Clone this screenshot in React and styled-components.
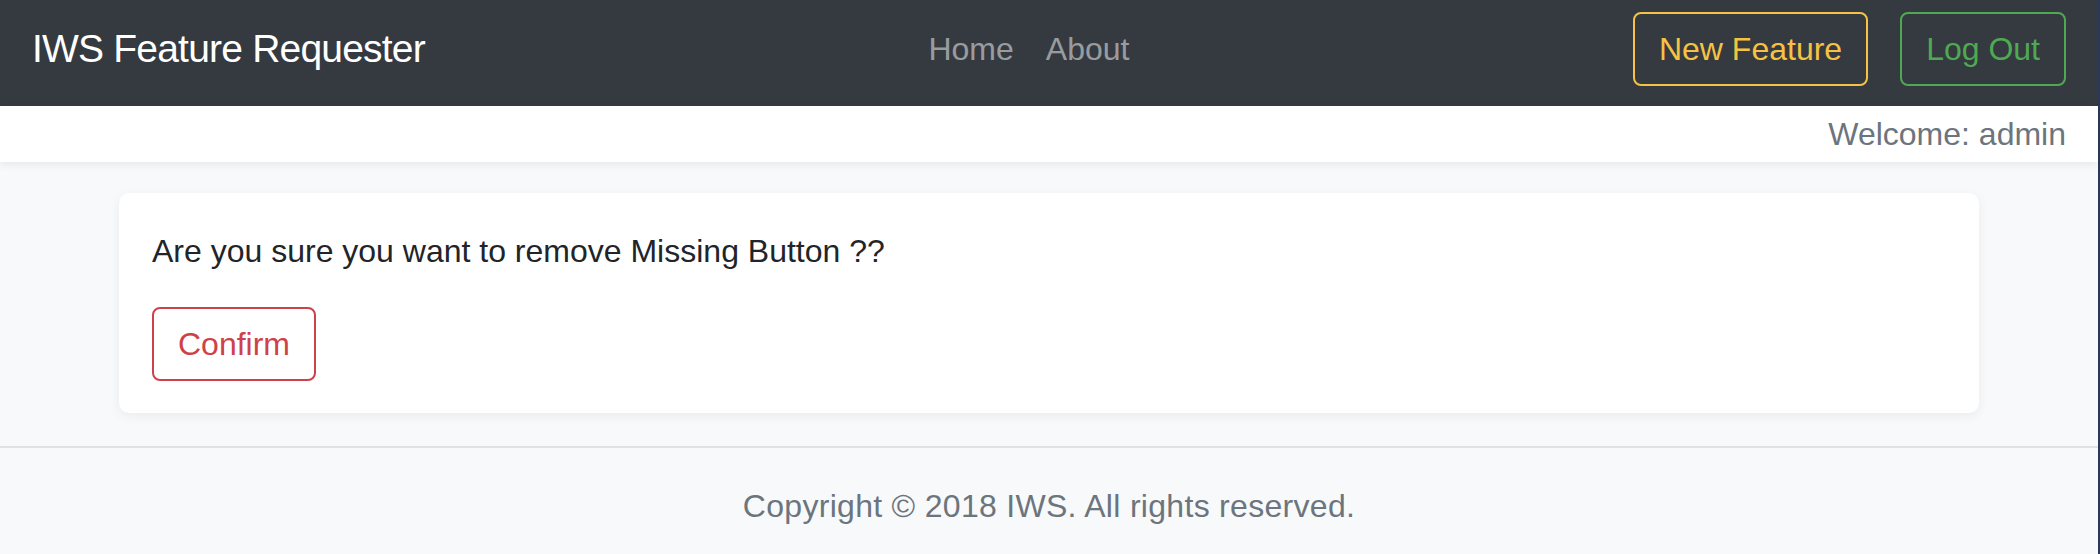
import React from 'react';
import styled, { createGlobalStyle } from 'styled-components';

const GlobalStyle = createGlobalStyle`
  * {
    box-sizing: border-box;
  }

  body {
    margin: 0;
    font-family: "Liberation Sans", Arial, sans-serif;
    font-size: 32px;
    line-height: 48px;
    color: #212529;
    background: #f8f9fa;
  }
`;

const Page = styled.div`
  min-height: 554px;
  background: #f8f9fa;
  border-right: 2px solid #2c3859;
`;

const Navbar = styled.nav`
  display: flex;
  align-items: center;
  height: 106px;
  padding: 12px 32px 20px;
  background: #343a40;
`;

const Brand = styled.a`
  color: #fff;
  font-size: 39px;
  letter-spacing: -0.8px;
  text-decoration: none;
  white-space: nowrap;
`;

const NavLinks = styled.ul`
  display: flex;
  list-style: none;
  margin: 0 auto;
  padding: 0;
`;

const NavLink = styled.a`
  display: block;
  padding: 0 16px;
  color: rgba(255, 255, 255, 0.5);
  text-decoration: none;
`;

const Actions = styled.div`
  display: flex;
  gap: 32px;
`;

const OutlineButton = styled.button`
  height: 74px;
  padding: 0 24px;
  border: 2px solid ${(p) => p.color};
  border-radius: 8px;
  background: transparent;
  color: ${(p) => p.color};
  font-family: inherit;
  font-size: 32px;
  line-height: 48px;
  cursor: pointer;
`;

const WelcomeBar = styled.div`
  position: relative;
  height: 56px;
  padding: 4px 32px;
  text-align: right;
  color: #6c757d;
  background: #fff;
  box-shadow: 0 3px 8px rgba(0, 0, 0, 0.07);
`;

const Main = styled.main`
  padding: 31px 0 33px;
`;

const Card = styled.div`
  max-width: 1860px;
  margin: 0 auto;
  padding: 34px 33px 32px;
  background: #fff;
  border-radius: 10px;
  box-shadow: 0 3px 12px rgba(0, 0, 0, 0.06);
`;

const Question = styled.p`
  margin: 0 0 32px;
`;

const Footer = styled.footer`
  padding: 34px 0;
  border-top: 2px solid #dee2e6;
  text-align: center;
  color: #6c757d;
  letter-spacing: 0.3px;
`;

const App = () => {
  const links = ['Home', 'About'];

  return (
    <>
      <GlobalStyle />
      <Page>
        <Navbar>
          <Brand href="#">IWS Feature Requester</Brand>
          <NavLinks>
            {links.map((link) => (
              <li key={link}>
                <NavLink href="#">{link}</NavLink>
              </li>
            ))}
          </NavLinks>
          <Actions>
            <OutlineButton color="#f6c243">New Feature</OutlineButton>
            <OutlineButton color="#4fa952">Log Out</OutlineButton>
          </Actions>
        </Navbar>
        <WelcomeBar>Welcome: admin</WelcomeBar>
        <Main>
          <Card>
            <Question>Are you sure you want to remove Missing Button ??</Question>
            <OutlineButton color="#cf4149">Confirm</OutlineButton>
          </Card>
        </Main>
        <Footer>Copyright © 2018 IWS. All rights reserved.</Footer>
      </Page>
    </>
  );
};

export default App;
